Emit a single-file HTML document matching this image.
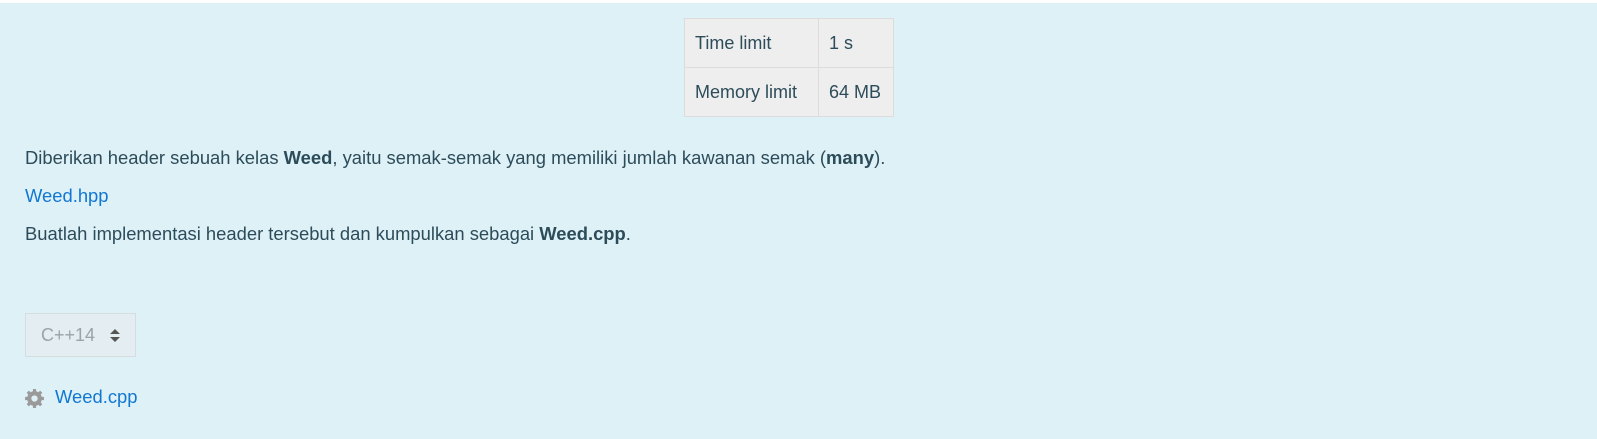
<!DOCTYPE html>
<html><head><style>
body{margin:0;width:1597px;height:439px;background:#fff;font-family:"Liberation Sans",sans-serif;font-size:18.4px;color:#2d4c5a;overflow:hidden}
.wrap{position:absolute;top:3px;left:0;width:1597px;height:436px;background:#def1f7}
table{position:absolute;left:684px;top:15px;border-collapse:collapse;background:#eeeeee;table-layout:fixed;width:208px}
td{border:1px solid #dcdcdc;padding:0 0 0 10px;height:48px;font-size:18px;color:#2d4c5a;white-space:nowrap;overflow:hidden}
td.a{width:123px}td.b{width:64px}
p{position:absolute;left:25px;margin:0;white-space:nowrap}
a{color:#1177d1;text-decoration:none}
.sel{position:absolute;left:25px;top:310px;width:111px;height:44px;border:1px solid #d6dde0;background:#e4eef2;box-sizing:border-box;color:#9aa4a8;font-size:18px;line-height:42px;padding-left:15px}
</style></head><body><div class="wrap">
<table><tr><td class="a">Time limit</td><td class="b">1 s</td></tr><tr><td class="a">Memory limit</td><td class="b">64 MB</td></tr></table>
<p style="top:144px">Diberikan header sebuah kelas <b>Weed</b>, yaitu semak-semak yang memiliki jumlah kawanan semak (<b>many</b>).</p>
<p style="top:182px"><a>Weed.hpp</a></p>
<p style="top:220px">Buatlah implementasi header tersebut dan kumpulkan sebagai <b>Weed.cpp</b>.</p>
<div class="sel">C++14 <svg style="position:absolute;left:84px;top:15px" width="10" height="13" viewBox="0 0 10 13"><path d="M5 0L10 5H0Z M5 13L10 8H0Z" fill="#555"/></svg></div>
<svg style="position:absolute;left:24px;top:385px" width="21" height="21" viewBox="0 0 20 20"><g fill="#9a9a9a"><circle cx="10" cy="10" r="7"/><g stroke="#9a9a9a" stroke-width="3"><line x1="10" y1="1" x2="10" y2="19"/><line x1="1" y1="10" x2="19" y2="10"/><line x1="3.6" y1="3.6" x2="16.4" y2="16.4"/><line x1="16.4" y1="3.6" x2="3.6" y2="16.4"/></g><circle cx="10" cy="10" r="3" fill="#def1f7"/></g></svg>
<p style="top:383px;left:55px"><a>Weed.cpp</a></p>
</div></body></html>
